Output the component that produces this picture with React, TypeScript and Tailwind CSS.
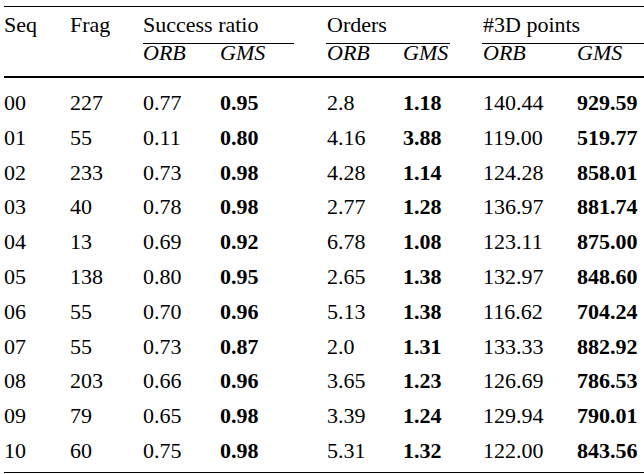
import React from "react";

const rows: [string, string, string, string, string, string, string, string][] = [
  ["00", "227", "0.77", "0.95", "2.8", "1.18", "140.44", "929.59"],
  ["01", "55", "0.11", "0.80", "4.16", "3.88", "119.00", "519.77"],
  ["02", "233", "0.73", "0.98", "4.28", "1.14", "124.28", "858.01"],
  ["03", "40", "0.78", "0.98", "2.77", "1.28", "136.97", "881.74"],
  ["04", "13", "0.69", "0.92", "6.78", "1.08", "123.11", "875.00"],
  ["05", "138", "0.80", "0.95", "2.65", "1.38", "132.97", "848.60"],
  ["06", "55", "0.70", "0.96", "5.13", "1.38", "116.62", "704.24"],
  ["07", "55", "0.73", "0.87", "2.0", "1.31", "133.33", "882.92"],
  ["08", "203", "0.66", "0.96", "3.65", "1.23", "126.69", "786.53"],
  ["09", "79", "0.65", "0.98", "3.39", "1.24", "129.94", "790.01"],
  ["10", "60", "0.75", "0.98", "5.31", "1.32", "122.00", "843.56"],
];

const cols = "grid grid-cols-[66px_73px_77px_107px_76px_80px_94px_67px]";

export default function App() {
  return (
    <div
      className="w-[644px] h-[474px] bg-white text-black pl-[4px] overflow-hidden"
      style={{ fontFamily: '"Liberation Serif", "Times New Roman", serif' }}
    >
      <div className="h-[6px]" />
      <div className="h-[1px] bg-black" />
      {/* header row 1 */}
      <div className={`${cols} text-[22px]`}>
        <div className="leading-[36px] h-[37px]">Seq</div>
        <div className="leading-[36px] h-[37px]">Frag</div>
        <div className="col-span-2 flex flex-col">
          <div className="leading-[36px] h-[36px]">Success ratio</div>
          <div className="h-[1px] bg-black mr-[33px]" />
        </div>
        <div className="col-span-2 flex flex-col">
          <div className="leading-[36px] h-[36px]">Orders</div>
          <div className="h-[1px] bg-black mr-[33px] -ml-[1px]" />
        </div>
        <div className="col-span-2 flex flex-col">
          <div className="leading-[36px] h-[36px]">#3D points</div>
          <div className="h-[1px] bg-black -ml-[1px]" />
        </div>
      </div>
      {/* header row 2 */}
      <div className={`${cols} text-[22px] italic h-[32px]`}>
        <div />
        <div />
        <div className="leading-[17px]">ORB</div>
        <div className="leading-[17px]">GMS</div>
        <div className="leading-[17px]">ORB</div>
        <div className="leading-[17px]">GMS</div>
        <div className="leading-[17px]">ORB</div>
        <div className="leading-[17px]">GMS</div>
      </div>
      <div className="h-[2px] bg-black" />
      <div className="h-[8px]" />
      {rows.map((r) => (
        <div key={r[0]} className={`${cols} text-[22px] leading-[34.8px] h-[34.8px]`}>
          <div>{r[0]}</div>
          <div>{r[1]}</div>
          <div>{r[2]}</div>
          <div className="font-bold">{r[3]}</div>
          <div>{r[4]}</div>
          <div className="font-bold">{r[5]}</div>
          <div>{r[6]}</div>
          <div className="font-bold">{r[7]}</div>
        </div>
      ))}
      <div className="h-[3px]" />
      <div className="h-[1px] bg-black" />
    </div>
  );
}
